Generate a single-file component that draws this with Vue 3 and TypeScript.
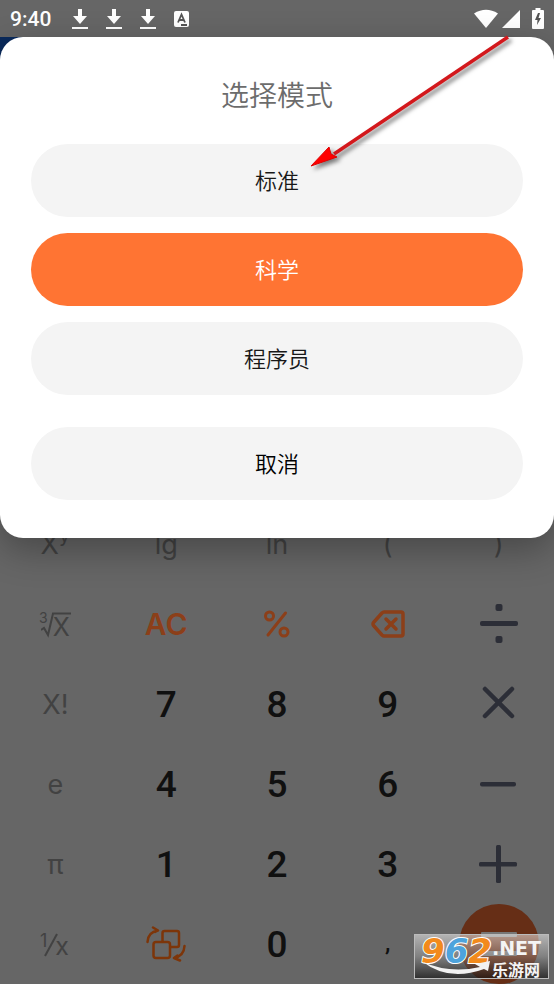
<script setup lang="ts">
import { ref } from 'vue'

type KeyKind = 'fn' | 'digit' | 'action' | 'op' | 'equals'
interface Key {
  id: string
  kind: KeyKind
  label?: string
  sup?: string
  icon?: string
  name?: string
}

const modes = ['标准', '科学', '程序员']
const selected = ref('科学')

const keys: Key[] = [
  { id: 'pow', kind: 'fn', label: 'X', sup: 'y' },
  { id: 'lg', kind: 'fn', label: 'lg' },
  { id: 'ln', kind: 'fn', label: 'ln' },
  { id: 'open', kind: 'fn', label: '(' },
  { id: 'close', kind: 'fn', label: ')' },
  { id: 'root', kind: 'fn', icon: 'root', name: '³√x' },
  { id: 'ac', kind: 'action', label: 'AC' },
  { id: 'percent', kind: 'action', icon: 'percent', name: '%' },
  { id: 'back', kind: 'action', icon: 'back', name: '⌫' },
  { id: 'div', kind: 'op', icon: 'div', name: '÷' },
  { id: 'fact', kind: 'fn', label: 'X!' },
  { id: '7', kind: 'digit', label: '7' },
  { id: '8', kind: 'digit', label: '8' },
  { id: '9', kind: 'digit', label: '9' },
  { id: 'mul', kind: 'op', icon: 'mul', name: '×' },
  { id: 'e', kind: 'fn', label: 'e' },
  { id: '4', kind: 'digit', label: '4' },
  { id: '5', kind: 'digit', label: '5' },
  { id: '6', kind: 'digit', label: '6' },
  { id: 'sub', kind: 'op', icon: 'sub', name: '−' },
  { id: 'pi', kind: 'fn', label: 'π' },
  { id: '1', kind: 'digit', label: '1' },
  { id: '2', kind: 'digit', label: '2' },
  { id: '3', kind: 'digit', label: '3' },
  { id: 'add', kind: 'op', icon: 'add', name: '+' },
  { id: 'inv', kind: 'fn', icon: 'inv', name: '1/x' },
  { id: 'swap', kind: 'action', icon: 'swap', name: '⇄' },
  { id: '0', kind: 'digit', label: '0' },
  { id: 'comma', kind: 'digit', label: ',' },
  { id: 'eq', kind: 'equals', icon: 'eq', name: '=' },
]
</script>

<template>
  <div class="screen">
    <header class="status">
      <span class="clock">9:40</span>
      <svg v-for="n in 3" :key="n" class="download" width="16" height="22" viewBox="0 0 16 22">
        <path d="M6 1h4v7h5l-7 8-7-8h5zM0 19h16v2H0z" fill="#fff" />
      </svg>
      <svg class="ime" width="16" height="18" viewBox="0 0 16 18">
        <rect x="1" y="1" width="15" height="16" rx="2" fill="#fff" />
        <path d="M5 12.500L8.500 4.500 12 12.500M6 10h5M8 15h6" fill="none" stroke="#555" stroke-width="1.800" />
      </svg>
      <span class="spacer"></span>
      <svg width="24" height="20" viewBox="0 0 24 20">
        <path d="M0 4.500Q12-3 24 4.500L12 19z" fill="#fff" />
      </svg>
      <svg class="signal" width="18" height="18" viewBox="0 0 18 18">
        <path d="M18 0v18H0z" fill="#fff" />
      </svg>
      <svg class="battery" width="12" height="21" viewBox="0 0 12 21">
        <path d="M3.500 0h5v2H11q1 0 1 1v17q0 1-1 1H1q-1 0-1-1V3q0-1 1-1h2.500z" fill="#fff" />
        <path d="M6 5L3 12h2.500l-.500 5 4-7H6.500L8 5z" fill="#555" />
      </svg>
    </header>

    <main class="app">
      <div class="edge"></div>
      <div class="keypad">
        <button v-for="k in keys" :key="k.id" type="button" class="key" :class="[k.kind, 'key-' + k.id]" :aria-label="k.name">
          <span v-if="k.label">{{ k.label }}<sup v-if="k.sup">{{ k.sup }}</sup></span>
          <span v-else-if="k.icon === 'root'" class="root">
            <small>3</small>
            <svg width="30" height="26" viewBox="0 0 30 26">
              <path d="M0 18l3-2 4 7L12 1.500h18" fill="none" stroke="currentColor" stroke-width="2" />
            </svg>
            <b>X</b>
          </span>
          <span v-else-if="k.icon === 'inv'" class="inverse">
            <small>1</small>
            <svg width="14" height="24" viewBox="0 0 14 24">
              <path d="M13 1L1 23" fill="none" stroke="currentColor" stroke-width="2" />
            </svg>
            <b>x</b>
          </span>
          <svg v-else-if="k.icon === 'percent'" width="26" height="28" viewBox="0 0 26 28" fill="none" stroke="currentColor" stroke-width="3" stroke-linecap="round">
            <circle cx="5.500" cy="6" r="4" /><circle cx="20" cy="22" r="4" /><path d="M21.500 3L4 25" />
          </svg>
          <svg v-else-if="k.icon === 'back'" width="34" height="28" viewBox="0 0 34 28" fill="none" stroke="currentColor" stroke-width="3.500" stroke-linecap="round" stroke-linejoin="round">
            <path d="M13 2h17q2 0 2 2v20q0 2-2 2H13q-1 0-2-1L2.500 15.500q-1-1.500 0-3L11 3q1-1 2-1z" /><path d="M15 9l10 10M25 9L15 19" />
          </svg>
          <svg v-else-if="k.icon === 'div'" width="40" height="40" viewBox="0 0 40 40" fill="currentColor">
            <rect x="1" y="17" width="38" height="5" rx="2" /><rect x="16.500" y="0" width="7" height="7" rx="2" /><rect x="16.500" y="32" width="7" height="7" rx="2" />
          </svg>
          <svg v-else-if="k.icon === 'mul'" width="40" height="40" viewBox="0 0 40 40" fill="none" stroke="currentColor" stroke-width="4.500" stroke-linecap="round">
            <path d="M6 5l27 27M33 5L6 32" />
          </svg>
          <svg v-else-if="k.icon === 'sub'" width="40" height="40" viewBox="0 0 40 40" fill="currentColor">
            <rect x="1" y="18" width="36" height="4.500" rx="2" />
          </svg>
          <svg v-else-if="k.icon === 'add'" width="40" height="40" viewBox="0 0 40 40" fill="currentColor">
            <rect x="0" y="18" width="38" height="4.500" rx="1.500" /><rect x="17" y="1" width="5" height="38" rx="1.500" />
          </svg>
          <svg v-else-if="k.icon === 'swap'" width="40" height="36" viewBox="0 0 40 36" fill="none" stroke="currentColor" stroke-width="2.500" stroke-linecap="round" stroke-linejoin="round">
            <rect x="7.500" y="16" width="16.500" height="16" rx="2.500" />
            <path d="M16.500 15V7q0-2 2-2h12.500q2 0 2 2v12q0 2-2 2h-6M1.500 16Q2 6 12 4.500M7 1.500l5 3-3 1.500M38.500 20Q38 30 28 32M31.500 29.500L28 32l6 2.500" />
          </svg>
          <svg v-else width="36" height="24" viewBox="0 0 36 24" fill="#777">
            <rect width="36" height="5" rx="1" /><rect y="19" width="36" height="5" rx="1" />
          </svg>
        </button>
      </div>

      <section class="dialog" role="dialog" aria-labelledby="mode-title">
        <h1 id="mode-title">选择模式</h1>
        <div class="choices">
          <button v-for="m in modes" :key="m" type="button" class="choice" :class="{ active: m === selected }" @click="selected = m">{{ m }}</button>
        </div>
        <button type="button" class="choice cancel">取消</button>
      </section>
    </main>

    <svg class="pointer" width="210" height="140" viewBox="0 0 210 140">
      <path d="M202 2L28 119" stroke="#d3181c" stroke-width="3.500" />
      <path d="M5 131L23 112L25 119L31 122Z" fill="#f00" stroke="#d00" />
    </svg>

    <div class="watermark">
      <div class="brand"><span>9</span><span class="blue">6</span><span>2</span></div>
      <div class="domain">
        <span class="net">.NET</span>
        <span class="site">乐游网</span>
      </div>
      <svg class="swoosh" width="70" height="16" viewBox="0 0 70 16">
        <path d="M1 1Q28 13 58 6L53 3L68 0L66 10L62 8Q27 21 1 1z" fill="#f2f2f2" />
      </svg>
    </div>
  </div>
</template>

<style>
body { margin: 0; }
</style>

<style scoped>
* { box-sizing: border-box; }
.screen {
  position: relative;
  display: flex;
  flex-direction: column;
  min-height: 100vh;
  background: #666;
  font-family: Roboto, "Noto Sans CJK SC", sans-serif;
  overflow: hidden;
}
button { margin: 0; padding: 0; border: 0; background: none; font: inherit; color: inherit; }
svg { display: block; flex: none; }
.status {
  display: flex;
  align-items: center;
  height: 37px;
  padding: 0 10px;
  color: #fff;
}
.clock { width: 62px; font-size: 21px; font-weight: 500; line-height: 24px; }
.download { margin-right: 18px; }
.ime { margin-left: -1px; }
.spacer { flex: 1; }
.signal { margin: 0 12px 0 4px; }
.app { position: relative; flex: 1; display: flex; flex-direction: column; }
.edge { width: 24px; height: 24px; background: #0a2a5c; }
.keypad {
  display: grid;
  grid-template-columns: repeat(5, 1fr);
  grid-auto-rows: 80px;
  margin-top: auto;
}
.key { display: flex; align-items: center; justify-content: center; }
.fn { padding-top: 2px; color: #424242; font: 400 27px/32px Inter, sans-serif; }
.fn sup { font-size: 20px; line-height: 0; vertical-align: 12px; }
.digit { padding-top: 1px; color: #101010; font-size: 37px; font-weight: 500; }
.key-comma { font-size: 24px; padding-bottom: 4px; }
.action { color: #8c3f19; font: 600 30px/36px Inter, sans-serif; }
.key-swap { color: #7d3509; }
.op { color: #2c2e37; }
.equals {
  justify-self: center;
  width: 80px;
  border-radius: 50%;
  background: #662e16;
}
.root, .inverse { display: flex; align-items: center; margin-right: 2px; }
.root small { align-self: flex-start; font-size: 14px; line-height: 16px; margin-right: -7px; }
.root b { margin-left: -18px; font-size: 25px; font-weight: 400; line-height: 26px; padding-top: 4px; }
.inverse small { align-self: flex-start; font-size: 18px; line-height: 20px; margin-right: -3px; }
.inverse b { font-size: 25px; font-weight: 400; line-height: 26px; margin-left: -3px; padding-top: 2px; }
.dialog {
  position: absolute;
  top: 0;
  left: 0;
  right: 0;
  display: flex;
  flex-direction: column;
  gap: 32px;
  padding: 37px 31px 38px;
  border-radius: 23px;
  background: #fff;
  box-shadow: 0 12px 36px rgba(0, 0, 0, 0.3);
  font-family: "Noto Sans CJK SC", sans-serif;
  font-weight: 350;
}
h1 {
  margin: 0 0 -2px;
  color: #6c6c6c;
  font-size: 28px;
  font-weight: 350;
  line-height: 40px;
  text-align: center;
}
.choices { display: flex; flex-direction: column; gap: 16px; }
.choice {
  height: 73px;
  padding-bottom: 3px;
  border-radius: 37px;
  background: #f4f4f4;
  color: #181818;
  font-size: 22px;
  line-height: 32px;
  text-align: center;
}
.choice.active { background: #ff7433; color: #fff; }
.choice.cancel { color: #000; }
.pointer { position: absolute; top: 35px; left: 306px; filter: drop-shadow(3px 3px 2px rgba(0, 0, 0, 0.5)); }
.watermark {
  position: absolute;
  right: 5px;
  bottom: 5px;
  display: flex;
  width: 135px;
  height: 45px;
  padding-left: 6px;
  border: 1px solid #bbb;
  background: linear-gradient(rgba(255, 255, 255, 0.5), rgba(190, 190, 190, 0.3) 50%, rgba(20, 20, 20, 0.65));
}
.brand {
  width: 71px;
  color: #f28a1c;
  font: italic 700 34px/32px "DejaVu Sans", sans-serif;
  white-space: nowrap;
  -webkit-text-stroke: 2px #fff;
  paint-order: stroke fill;
}
.blue { color: #4da3dc; }
.domain { display: flex; flex-direction: column; color: #f4f4f4; }
.net { font: 700 19px/26px "DejaVu Sans", sans-serif; }
.site { font: 700 16px/16px "Noto Sans CJK SC", sans-serif; }
.swoosh { position: absolute; left: 7px; bottom: 1px; }
</style>
